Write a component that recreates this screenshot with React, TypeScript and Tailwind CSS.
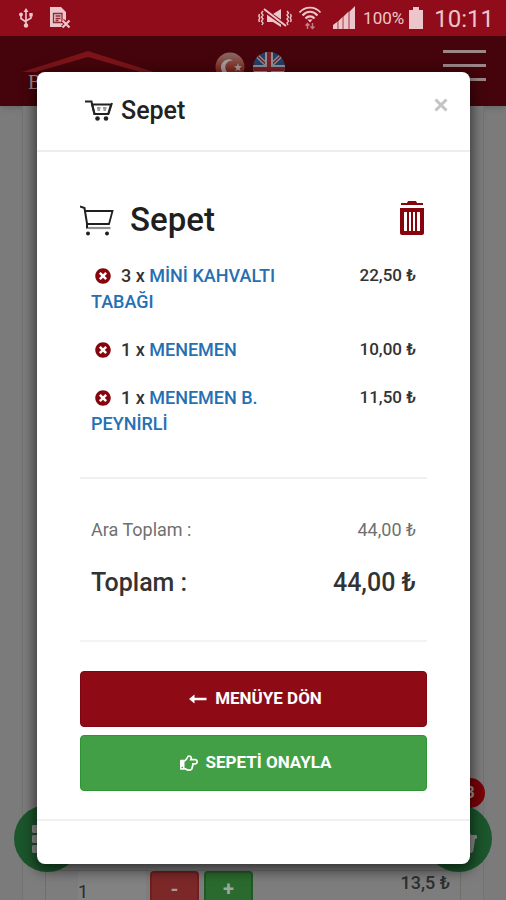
import React, { useState } from 'react';
import { FaRegHandPointRight, FaShoppingBasket, FaThList, FaTimesCircle } from 'react-icons/fa';

interface CartItem {
  id: string;
  quantity: number;
  name: string;
  price: string;
}

const cartItems: CartItem[] = [
  { id: 'mini-kahvalti', quantity: 3, name: 'MİNİ KAHVALTI TABAĞI', price: '22,50 ₺' },
  { id: 'menemen', quantity: 1, name: 'MENEMEN', price: '10,00 ₺' },
  { id: 'menemen-peynirli', quantity: 1, name: 'MENEMEN B. PEYNİRLİ', price: '11,50 ₺' },
];

const UsbIcon = () => (
  <svg className="w-4 h-5" viewBox="0 0 16 20" fill="none" stroke="currentColor" strokeWidth="1.6">
    <path d="M8 3v14M3 7v3.5L8 14M13 7v3L8 13" />
    <path d="M8 0l2.5 4h-5z" fill="currentColor" stroke="none" />
    <circle cx="8" cy="17.5" r="2.2" fill="currentColor" stroke="none" />
    <circle cx="3" cy="6.5" r="1.9" fill="currentColor" stroke="none" />
    <path d="M11.3 5h3.4v3.4h-3.4z" fill="currentColor" stroke="none" />
  </svg>
);

const SimErrorIcon = () => (
  <svg className="w-[22px] h-[22px]" viewBox="0 0 22 22" fill="none">
    <path d="M1 0h11l5 5v8l-3 3v4H1z" fill="currentColor" />
    <path d="M4.500 6.500h8.500v9H4.500zM6.500 9h5M6.500 11.500h5M6.500 13.500h3" stroke="#8f2a35" strokeWidth="1.300" />
    <path d="M13.500 13.500l7 7M20.500 13.500l-7 7" stroke="#900c1a" strokeWidth="4" />
    <path d="M13.500 13.500l7 7M20.500 13.500l-7 7" stroke="currentColor" strokeWidth="2.200" />
  </svg>
);

const MuteVibrateIcon = () => (
  <svg className="w-[34px] h-5" viewBox="0 0 34 20" fill="none" stroke="currentColor">
    <path d="M9 6h6l8-5v18l-8-5H9z" fill="currentColor" stroke="none" />
    <path d="M6 2l24 17" stroke="#900c1a" strokeWidth="4" />
    <path d="M6 1l22 17" strokeWidth="2" />
    <path d="M5 3L3.500 5 5 7 3.500 9 5 11 3.500 13 5 15 4 17M1.500 6L.8 8l.9 2-.9 2 .7 2" strokeWidth="1.400" />
    <path d="M29 3l1.500 2L29 7l1.500 2L29 11l1.500 2L29 15l1 2M32.500 6l.7 2-.9 2 .9 2-.7 2" strokeWidth="1.400" />
  </svg>
);

const WifiIcon = () => (
  <svg className="w-6 h-6" viewBox="0 0 24 24" fill="none" stroke="currentColor">
    <path d="M1.500 6.500C7 0 17 0 22.500 6.500" strokeWidth="1.800" />
    <path d="M4.500 9.500C9 4.500 15 4.500 19.500 9.500" strokeWidth="2.200" />
    <path d="M7.500 12.500c2.500-2.800 6.500-2.800 9 0" strokeWidth="2.200" />
    <path d="M9.500 13.500L12 16.500l2.500-3z" fill="currentColor" stroke="none" />
    <path d="M9.500 23v-5M7.500 19.500l2-2 2 2M14.500 17v5M12.500 20.500l2 2 2-2" strokeWidth="1.400" opacity=".6" />
  </svg>
);

const SignalIcon = () => (
  <svg className="w-6 h-6" viewBox="0 0 24 24" fill="currentColor">
    <path d="M1 23v-4l4-3v7zM6.500 23v-8l4-4v12z" />
    <path d="M12 23V10l4-4v17zM18 23V5l5-5v23z" />
    <path d="M5 16l1.500-1v8H5zM10.500 11l1.500-1v13h-1.500zM16 6l2-1v18h-2z" opacity=".6" />
  </svg>
);

const BatteryIcon = () => (
  <svg className="w-4 h-[22px]" viewBox="0 0 16 22" fill="currentColor">
    <path d="M5 0h6v3h4v19H1V3h4z" />
  </svg>
);

const TurkishFlag = () => (
  <svg className="w-[30px] h-[30px]" viewBox="0 0 30 30">
    <defs>
      <linearGradient id="gloss" x1="0" y1="0" x2="0" y2="1">
        <stop offset="0" stopColor="#866a66" />
        <stop offset="0.600" stopColor="#84291f" />
      </linearGradient>
    </defs>
    <circle cx="15" cy="15" r="14.500" fill="url(#gloss)" />
    <path d="M18 8.500a8 8 0 1 0 1 13a6.700 6.700 0 1 1-1-13z" fill="#a49b9b" />
    <path d="M23 11l1 3 3 .2-2.400 2 1 3-2.600-1.700-2.600 1.700 1-3-2.400-2 3-.2z" fill="#a49b9b" />
  </svg>
);

const BritishFlag = () => (
  <svg className="w-8 h-[30px]" viewBox="0 0 32 30">
    <defs>
      <clipPath id="round">
        <ellipse cx="16" cy="15" rx="16" ry="15" />
      </clipPath>
    </defs>
    <g clipPath="url(#round)">
      <path d="M0 0h32v30H0z" fill="#223f66" />
      <path d="M0 0l32 30M32 0L0 30" stroke="#8f8f93" strokeWidth="4" />
      <path d="M0 0l32 30M32 0L0 30" stroke="#7a2027" strokeWidth="1.500" />
      <path d="M16 0v30M0 17h32" stroke="#8f8f93" strokeWidth="8" />
      <path d="M16 0v30M0 17h32" stroke="#7a2027" strokeWidth="4" />
    </g>
  </svg>
);

const CartFilledIcon = () => (
  <svg className="w-7 h-[22px]" viewBox="0 0 28 22" fill="none" stroke="currentColor">
    <path d="M0 1.500h6.500l3 12.500H23" strokeWidth="2" />
    <path d="M7 4.500h19l-2.800 9.500H9.500z" strokeWidth="2" />
    <path d="M23.500 14l3.500-11" strokeWidth="1.800" />
    <path d="M12 8h3.500M18 8h3.500M12.500 10h2.500M18.500 10h2.500" strokeWidth="1.400" opacity=".6" />
    <circle cx="12.500" cy="18.500" r="2.300" fill="currentColor" stroke="none" />
    <circle cx="21" cy="18.500" r="2.300" fill="currentColor" stroke="none" />
  </svg>
);

const CartOutlineIcon = () => (
  <svg className="w-[34px] h-8" viewBox="0 0 34 32" fill="none" stroke="currentColor">
    <path d="M0 2.500l4.500 1.500L7 19.500V24" strokeWidth="2" />
    <path d="M4.500 7H32.500l-3.500 13H7" strokeWidth="1.800" />
    <path d="M6 24h24.500" strokeWidth="2.200" opacity=".5" />
    <circle cx="8" cy="29.500" r="2" fill="currentColor" stroke="none" />
    <circle cx="27" cy="29.500" r="2" fill="currentColor" stroke="none" />
  </svg>
);

const TrashIcon = () => (
  <svg className="w-6 h-[34px]" viewBox="0 0 24 34">
    <path d="M1 2h6l1-2h8l1 2h6v2H1z" fill="#86050d" />
    <path d="M0 7h24v25q0 2-2 2H2q-2 0-2-2z" fill="#86050d" />
    <path d="M4 11h3v19H4zM9 11h2v19H9zM13 11h2v19h-2zM17 11h3v19h-3z" fill="#fff" />
  </svg>
);

const LongArrowLeft = () => (
  <svg className="w-[18px] h-2.5" viewBox="0 0 18 10" fill="currentColor">
    <path d="M5.500.5v3.200h12v2.600h-12v3.200L0 5z" />
  </svg>
);

const StatusBar = () => (
  <div className="relative z-20 flex h-9 items-center justify-between bg-[#900c1a] pl-[18px] pr-3 text-[#edc6cb]">
    <div className="flex items-center gap-[15px]">
      <UsbIcon />
      <SimErrorIcon />
    </div>
    <div className="flex items-center">
      <MuteVibrateIcon />
      <span className="ml-1.5"><WifiIcon /></span>
      <span className="ml-2.5"><SignalIcon /></span>
      <span className="ml-[7px] text-[17px] leading-5">100%</span>
      <span className="ml-1"><BatteryIcon /></span>
      <span className="ml-2.5 pt-0.5 text-2xl leading-8">10:11</span>
    </div>
  </div>
);

const SiteHeader = () => (
  <header className="flex h-[70px] items-start justify-between bg-[#45040b] pl-[22px] pr-5 pt-3.5 shadow-md">
    <a href="#home" className="block w-[132px] text-[#a08a8c]">
      <svg className="block h-[22px] w-full" viewBox="0 0 132 22" fill="#7a1419">
        <path d="M0 22L66 1l66 21h-14L66 7 14 22z" />
      </svg>
      <span className="block pl-1.5 font-['Liberation_Serif',serif] text-xl leading-5">B</span>
    </a>
    <div className="flex gap-2 pr-[98px] pt-0.5">
      <button aria-label="Türkçe"><TurkishFlag /></button>
      <button aria-label="English"><BritishFlag /></button>
    </div>
    <button aria-label="Menü" className="flex w-[43px] flex-col gap-[11px]">
      <span className="h-[3px] w-full bg-[#9b8688]" />
      <span className="h-[3px] w-full bg-[#9b8688]" />
      <span className="h-[3px] w-full bg-[#9b8688]" />
    </button>
  </header>
);

const CartModal = ({ onClose }: { onClose: () => void }) => (
  <div className="absolute inset-0 z-10 pl-[37px] pr-9 pt-[72px]">
    <div role="dialog" aria-label="Sepet" className="rounded-lg bg-white shadow-[0_4px_14px_2px_rgba(0,0,0,0.6)]">
      <div className="flex h-20 items-center justify-between border-b-2 border-[#ededed] pl-12 pr-[22px]">
        <h4 className="flex items-center gap-2 text-[25px] font-medium leading-8 text-[#222]">
          <CartFilledIcon /> Sepet
        </h4>
        <button aria-label="Kapat" onClick={onClose} className="pb-3 text-[#c4c4c4]">
          <svg className="h-3.5 w-3.5" viewBox="0 0 14 14" stroke="currentColor" strokeWidth="3">
            <path d="M1.500 1.500l11 11M12.500 1.500l-11 11" />
          </svg>
        </button>
      </div>

      <div className="px-[43px] pb-7 pt-[50px]">
        <div className="flex h-9 items-center justify-between pr-[3px]">
          <h3 className="flex items-center gap-4 text-[33px] font-medium leading-9 text-[#1f1f1f]">
            <CartOutlineIcon /> Sepet
          </h3>
          <button aria-label="Sepeti boşalt" className="pb-1"><TrashIcon /></button>
        </div>

        {/* Cart lines */}
        <ul className="mt-[25px] flex flex-col gap-[22px] px-[11px]">
          {cartItems.map((item) => (
            <li key={item.id} className="flex items-start justify-between font-medium text-[#333]">
              <div className="w-[200px] text-lg leading-[26px]">
                <button aria-label={`${item.name} sil`} className="ml-1 mr-2.5 align-[-2px] text-[#86050d]">
                  <FaTimesCircle className="h-4 w-4" />
                </button>
                {`${item.quantity} x `}
                <a href={`#${item.id}`} className="text-[#2470b3]">{item.name}</a>
              </div>
              <span className="text-[17px] leading-6">{item.price}</span>
            </li>
          ))}
        </ul>

        <div className="mt-10 border-t-2 border-[#f0f0f0]" />

        <div className="mt-[38px] flex justify-between px-[11px] text-lg leading-[26px] text-[#707070]">
          <span>Ara Toplam :</span>
          <span>44,00 ₺</span>
        </div>
        <div className="mt-[22px] flex justify-between px-[11px] text-[25px] font-medium leading-9 text-[#333]">
          <span>Toplam :</span>
          <span>44,00 ₺</span>
        </div>

        <div className="mt-[39px] border-t-2 border-[#f3f3f3]" />

        <div className="mt-[29px] flex flex-col gap-2 text-[17px] font-bold text-white">
          <button onClick={onClose} className="flex h-14 items-center justify-center gap-2 rounded-sm border border-[#7f0610] bg-[#8e0b16] pl-1">
            <LongArrowLeft /> MENÜYE DÖN
          </button>
          <button className="flex h-14 items-center justify-center gap-2 rounded-sm border border-[#2f9434] bg-[#439f45] pl-1">
            <FaRegHandPointRight className="h-[18px] w-[18px]" /> SEPETİ ONAYLA
          </button>
        </div>
      </div>

      <div className="h-[45px] border-t-2 border-[#f0f0f0]" />
    </div>
  </div>
);

const App: React.FC = () => {
  const [cartOpen, setCartOpen] = useState(true);

  return (
    <div className="relative flex h-screen flex-col overflow-hidden bg-[#7b7b7b] font-[Roboto,'Noto_Sans',sans-serif]">
      <StatusBar />
      <SiteHeader />

      <main className="mx-[22px] flex flex-1 flex-col justify-end border-x border-[#737373] bg-[#7d7d7d] px-[22px]">
        <div className="flex h-[30px] items-start border-x border-t border-[#6e6e6e] pl-8 pr-2.5">
          <input
            aria-label="Adet"
            defaultValue="1"
            className="h-10 w-[68px] shrink-0 bg-[#828282] text-lg text-[#2b2b2b] outline-none"
          />
          <button aria-label="Azalt" className="ml-1 h-9 w-[49px] shrink-0 rounded border-2 border-[#701e1e] bg-[#7d2828] text-xl font-bold leading-5 text-[#a89a9a]">
            -
          </button>
          <button aria-label="Artır" className="ml-[5px] h-9 w-[49px] shrink-0 rounded border-2 border-[#1f5a24] bg-[#2b6a2e] text-xl font-bold leading-5 text-[#9aa89a]">
            +
          </button>
          <span className="ml-auto text-lg font-medium leading-6 text-[#2e2e2e]">13,5 ₺</span>
        </div>
      </main>

      {/* Floating shortcuts */}
      <button aria-label="Kategoriler" className="absolute bottom-7 left-3.5 flex h-[67px] w-[67px] items-center justify-center rounded-full bg-[#1b562c] text-[#909090]">
        <FaThList className="h-8 w-8" />
      </button>
      <button aria-label="Sepeti aç" onClick={() => setCartOpen(true)} className="absolute bottom-7 right-3.5 flex h-[67px] w-[67px] items-center justify-center rounded-full bg-[#1b562c] text-[#909090]">
        <FaShoppingBasket className="h-9 w-9" />
        <span className="absolute -top-[27px] right-[7px] flex h-[30px] w-[30px] items-center justify-center rounded-full bg-[#7a0208] text-base font-bold text-[#a89a9a]">
          3
        </span>
      </button>

      {cartOpen && <CartModal onClose={() => setCartOpen(false)} />}
    </div>
  );
};

export default App;
